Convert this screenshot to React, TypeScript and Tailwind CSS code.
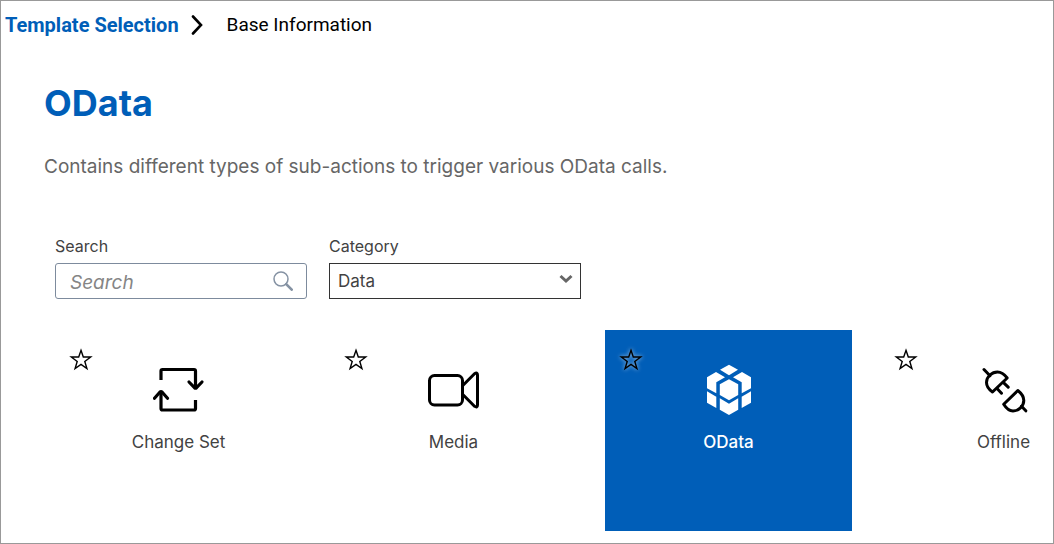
import type { ReactNode } from "react";

type Tile = { name: string; selected?: boolean; icon: ReactNode };

const stroke = {
  fill: "none",
  stroke: "currentColor",
  strokeWidth: 3.2,
  strokeLinecap: "round",
  strokeLinejoin: "round",
} as const;

const tiles: Tile[] = [
  {
    name: "Change Set",
    icon: (
      <g {...stroke}>
        <path d="M8 16V7q0-1.500 1.500-1.500H41q1.500 0 1.500 1.500V24.500" strokeLinecap="butt" />
        <path d="M36 18l5.500 5.700q1 .9 2 0L49 18" />
        <path d="M42.500 36V44.500q0 1.500-1.500 1.500H9.500Q8 46 8 44.500V28" strokeLinecap="butt" />
        <path d="M1.500 34.200L7 28q1-.9 2 0l5.500 6.200" />
      </g>
    ),
  },
  {
    name: "Media",
    icon: (
      <g {...stroke} strokeWidth={3}>
        <rect x="1.500" y="11.500" width="33" height="29.500" rx="5" />
        <path d="M34.800 21.500L46.500 9.700q3-1.700 3 1.300v30q0 3-3 1.300L34.800 30.500" />
      </g>
    ),
  },
  {
    name: "OData",
    selected: true,
    icon: (
      <g fill="currentColor">
        <path d="M26 .7l9 5-9 5.600-9-5.600z" />
        <path d="M13 8l9 5.300-8.700 5v11L4 24.300v-11z" />
        <path d="M39 8l-9 5.300 8.700 5v11l9.300-5v-11z" />
        <path d="M26 15.300l9.200 5V31L26 36.300 16.800 31V20.300z" />
        <path d="M4 27.300l9.300 5.500V44L4 38.700z" />
        <path d="M48 27.300l-9.300 5.500V44l9.300-5.300z" />
        <path d="M16.800 34.300l9.200 5.500 9.200-5.500v11.400L26 51l-9.200-5.300z" />
      </g>
    ),
  },
  {
    name: "Offline",
    icon: (
      <g {...stroke} strokeWidth={3}>
        <path d="M6 5.500l6 6.200M25.500 18.700l4.700 4.500M19.500 25l4 4.200M43.500 42.300l4.300 4.500" />
        <path d="M14.500 28C11 25.500 8.500 22 8.500 18.500C8.500 12.500 14 8 19.500 8C23.500 8 26.500 10.500 29.200 14z" />
        <path d="M25.700 40.300L39.800 26.500C43 29 45.800 33 45.800 36.500C45.800 42 40.500 47 35 47C31 47 28 44 25.700 40.300z" />
      </g>
    ),
  },
];

function TileCard({ name, selected, icon }: Tile) {
  return (
    <li
      className={
        "relative flex h-[201px] w-[247px] shrink-0 flex-col items-center pt-[34px] " +
        (selected ? "bg-[#005eb8] text-white" : "text-black")
      }
    >
      <button
        type="button"
        aria-label={`Mark ${name} as favorite`}
        className="absolute top-[17px] left-[14px] text-black"
      >
        <svg
          viewBox="0 0 24 24"
          className={"size-6 " + (selected ? "drop-shadow-[0_0_2px_rgba(255,255,255,0.7)]" : "")}
          fill="none"
          stroke="currentColor"
          strokeWidth="1.400"
        >
          <path d="M12 3.300l2.300 6.700h7.400l-5.900 4.500 2.100 7.100L12 17.400l-5.900 4.200 2.100-7.100L2.300 10h7.400z" />
        </svg>
      </button>
      <svg viewBox="0 0 52 52" className="size-[52px]" aria-hidden="true">
        {icon}
      </svg>
      <span className={"mt-3 text-[17px] leading-7 " + (selected ? "font-medium text-white" : "text-[#424242]")}>
        {name}
      </span>
    </li>
  );
}

export default function App() {
  return (
    <div className="min-h-screen overflow-hidden border border-[#999] bg-white font-['Inter',sans-serif]">
      <nav aria-label="Breadcrumb" className="flex h-12 items-center pl-1 font-['Roboto',sans-serif]">
        <a href="#templates" className="text-[20px] font-bold text-[#005eb8]">
          Template Selection
        </a>
        <svg viewBox="0 0 12 20" className="ml-3 h-5 w-3" aria-hidden="true">
          <path d="M2 1.500l8 8.500-8 8.500" fill="none" stroke="#000" strokeWidth="2.600" strokeLinecap="round" />
        </svg>
        <span className="ml-6 text-[19px] text-black">Base Information</span>
      </nav>

      <main>
        <header className="px-[43px] pt-[30px]">
          <h1 className="text-[36px] leading-[48px] font-bold text-[#005eb8]">OData</h1>
          <p className="mt-6 text-[19px] leading-8 text-[#666]">
            Contains different types of sub-actions to trigger various OData calls.
          </p>
        </header>

        <form className="mt-[49px] flex gap-[22px] pl-[54px]">
          <div className="flex w-[252px] flex-col">
            <label htmlFor="search" className="text-[16px] leading-7 text-[#424242]">
              Search
            </label>
            <div className="mt-[3px] flex h-9 items-center rounded-[3px] border border-[#7d8b9d] pr-[13px] pl-[14px]">
              <input
                id="search"
                type="text"
                placeholder="Search"
                className="h-full w-full min-w-0 pt-[2px] text-[19px] text-[#333] italic outline-none placeholder:text-[#858585]"
              />
              <svg viewBox="0 0 20 20" className="size-5 shrink-0" fill="none" stroke="#8592a3" aria-hidden="true">
                <circle cx="8" cy="8" r="7" strokeWidth="1.500" />
                <path d="M13.200 13.200l5.500 5.500" strokeWidth="2.600" strokeLinecap="round" />
              </svg>
            </div>
          </div>
          <div className="flex w-[252px] flex-col">
            <label htmlFor="category" className="text-[16px] leading-7 text-[#424242]">
              Category
            </label>
            <div className="relative mt-[3px]">
              <select
                id="category"
                className="block h-9 w-full appearance-none border border-[#333] bg-white pt-[2px] pr-8 pl-2 text-[17px] text-[#424242] outline-none"
              >
                <option>Data</option>
              </select>
              <svg
                viewBox="0 0 14 10"
                className="pointer-events-none absolute top-[11px] right-2 h-[10px] w-[14px]"
                fill="none"
                stroke="#666"
                strokeWidth="3"
                aria-hidden="true"
              >
                <path d="M1.500 2l5.500 5 5.500-5" />
              </svg>
            </div>
          </div>
        </form>

        <ul className="mt-[31px] flex gap-7 pb-3 pl-[54px]">
          {tiles.map((tile) => (
            <TileCard key={tile.name} {...tile} />
          ))}
        </ul>
      </main>
    </div>
  );
}
